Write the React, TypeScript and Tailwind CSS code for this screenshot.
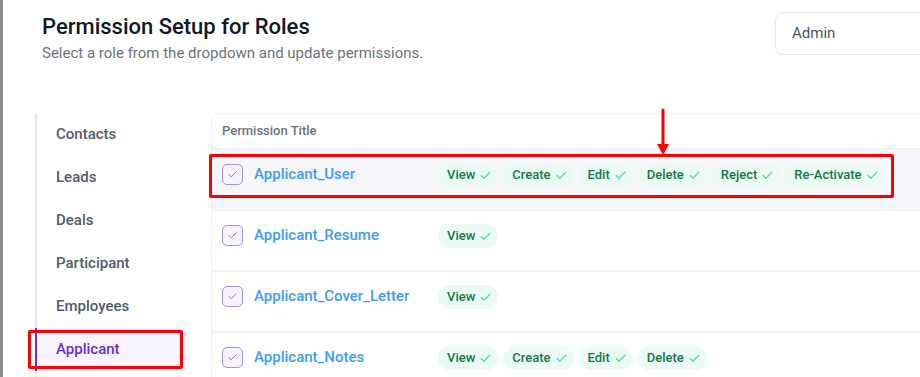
import { Check } from "lucide-react";
import type { FC } from "react";

const menu = ["Contacts", "Leads", "Deals", "Participant", "Employees", "Applicant"];

const rows: { title: string; perms: string[]; active?: boolean }[] = [
  {
    title: "Applicant_User",
    perms: ["View", "Create", "Edit", "Delete", "Reject", "Re-Activate"],
    active: true,
  },
  { title: "Applicant_Resume", perms: ["View"] },
  { title: "Applicant_Cover_Letter", perms: ["View"] },
  { title: "Applicant_Notes", perms: ["View", "Create", "Edit", "Delete"] },
];

const Badge: FC<{ label: string }> = ({ label }) => (
  <span className="flex h-[24px] items-center gap-[4px] rounded-full bg-[#ebfbf3] pl-[9px] pr-[6px] text-[13px] font-medium text-[#13794a]">
    {label}
    <Check size={13} strokeWidth={2.5} className="text-[#5cd6b6]" />
  </span>
);

const App: FC = () => {
  return (
    <div className="relative flex h-[377px] w-[920px] overflow-hidden bg-white font-['Roboto','Liberation_Sans',sans-serif]">
      <div className="w-[3px] shrink-0 bg-[#8d8d8d]" />

      <div className="flex w-[1000px] shrink-0 flex-col">
        {/* header */}
        <div className="flex items-start pl-[39px] pr-[28px] pt-[13px]">
          <div>
            <h1 className="text-[22px] font-medium leading-[28px] text-[#111827]">
              Permission Setup for Roles
            </h1>
            <p className="mt-[1px] text-[15px] leading-[22px] text-[#6b7280]">
              Select a role from the dropdown and update permissions.
            </p>
          </div>
          <div className="ml-auto mt-[-1px] flex h-[43px] w-[200px] items-center rounded-lg border border-[#e5e7eb] px-4 text-[15px] text-[#4b5563]">
            Admin
          </div>
        </div>

        {/* body */}
        <div className="mt-[49px] flex flex-1 items-start pl-[32px]">
          <div className="flex w-[153px] flex-col self-stretch border-l-2 border-[#e6e8ef]">
            {menu.map((m) => {
              const active = m === "Applicant";
              return (
                <div
                  key={m}
                  className={
                    active
                      ? "-ml-[2px] flex h-[43px] items-center border-l-2 border-[#6d28d9] bg-[#f7f3ff] pl-[19px] text-[15px] font-medium text-[#6b2fc9]"
                      : "flex h-[43px] items-center pl-[19px] text-[15px] font-medium text-[#525b6e]"
                  }
                >
                  {m}
                </div>
              );
            })}
          </div>

          <div className="ml-[23px] w-[760px] rounded-lg border border-[#eef0f4]">
            <div className="flex h-[36px] items-center border-b-2 border-[#f2f3f7] pl-[10px] text-[13px] font-medium text-[#6b7280]">
              Permission Title
            </div>
            {rows.map((r) => (
              <div
                key={r.title}
                className={
                  "flex h-[61px] items-start border-b-2 border-[#f2f3f7] pl-[10px] pt-[13px] " +
                  (r.active ? "bg-[#f6f7fa]" : "bg-white")
                }
              >
                <div className="flex w-[216px] shrink-0 items-center gap-[11px]">
                  <span className="flex h-[21px] w-[21px] items-center justify-center rounded-[5px] border border-[#a98bf0] bg-[#f7f4ff]">
                    <Check size={11} strokeWidth={2} className="text-[#8b5cf6]" />
                  </span>
                  <span className="text-[15px] font-medium text-[#3d9cf4]">{r.title}</span>
                </div>
                <div className="flex gap-[5px]">
                  {r.perms.map((p) => (
                    <Badge key={p} label={p} />
                  ))}
                </div>
              </div>
            ))}
          </div>
        </div>
      </div>

      {/* annotations */}
      <div className="absolute left-[209px] top-[154px] h-[44px] w-[685px] rounded-[2px] border-[3px] border-[#ff0000]" />
      <div className="absolute left-[28px] top-[330px] h-[39px] w-[155px] rounded-[2px] border-[3px] border-[#ff0000]" />
      <svg className="absolute left-[655px] top-[108px]" width="16" height="48" viewBox="0 0 16 48">
        <line x1="8" y1="2" x2="8" y2="38" stroke="#ff0000" strokeWidth="3" strokeLinecap="round" />
        <polygon points="2,36 14,36 8,47" fill="#ff0000" />
      </svg>
    </div>
  );
};

export default App;
